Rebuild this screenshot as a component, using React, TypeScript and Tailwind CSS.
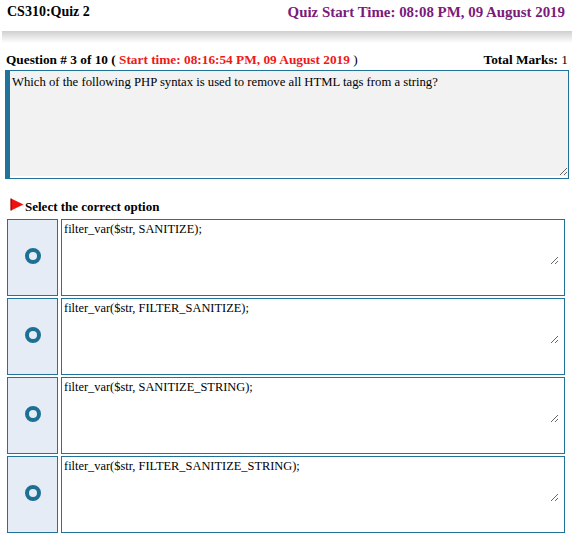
import { useState } from "react";

const options = [
  "filter_var($str, SANITIZE);",
  "filter_var($str, FILTER_SANITIZE);",
  "filter_var($str, SANITIZE_STRING);",
  "filter_var($str, FILTER_SANITIZE_STRING);",
];

export default function App() {
  const [picked, setPicked] = useState<number | null>(null);

  return (
    <div className="h-[540px] w-[574px] overflow-hidden bg-white font-['Liberation_Serif','Times_New_Roman',serif] text-black">
      <div className="flex h-[24px] items-center justify-between pl-[7px] pr-[9px] font-bold leading-none">
        <span className="text-[14px]">CS310:Quiz 2</span>
        <span className="text-[14.9px] text-[#7b1a7b]">
          Quiz Start Time: 08:08 PM, 09 August 2019
        </span>
      </div>

      <div className="mx-[2px] mt-[7px] h-[12px] bg-gradient-to-b from-[#cfcfcf] to-white" />

      <div className="mt-[9px] flex h-[16px] items-center justify-between px-[6px] text-[13.3px] leading-none">
        <p>
          <b>Question # 3 of 10 ( </b>
          <b className="text-[#f01818]">
            Start time: 08:16:54 PM, 09 August 2019
          </b>{" "}
          )
        </p>
        <p>
          <b>Total Marks:</b> 1
        </p>
      </div>

      <div className="mx-[5px] mt-[2px] flex h-[109px] w-[564px] border border-l-[5px] border-[#22739a] bg-white pb-[2px]">
        <textarea
          readOnly
          className="h-full w-full resize-y bg-[#f2f2f2] px-[2px] pt-[4px] text-[12.7px] leading-[15px] outline-none"
          defaultValue="Which of the following PHP syntax is used to remove all HTML tags from a string?"
        />
      </div>

      <div className="mt-[19px] flex h-[18px] items-center pl-[10px] text-[13px] font-bold">
        <svg width="14" height="13" viewBox="0 0 14 13" className="mb-[5px]">
          <path d="M1 0.5 L13.5 6.5 L1 12.5 Z" fill="#ee1111" />
          <path d="M1 0.5 L1 12.5" stroke="#990000" strokeWidth="1.2" />
        </svg>
        <span className="ml-[1px]">Select the correct option</span>
      </div>

      <div className="mt-[3px] flex flex-col gap-[2px] pl-[7px]">
        {options.map((text, index) => (
          <div key={text} className="flex h-[77px] gap-[3px]">
            <button
              type="button"
              onClick={() => setPicked(index)}
              className="flex w-[51px] items-center justify-center border border-[#22739a] bg-[#e6ecf5] pb-[3px]"
              aria-label={`Option ${index + 1}`}
            >
              <span
                className={
                  picked === index
                    ? "h-[16px] w-[16px] rounded-full border-[4px] border-[#1d6f93] bg-[#1d6f93]"
                    : "h-[16px] w-[16px] rounded-full border-[4px] border-[#1d6f93]"
                }
              />
            </button>
            <div className="w-[504px] border border-[#22739a] bg-white pl-[1px]">
              <textarea
                readOnly
                className="h-[45px] w-[496px] resize-y bg-white px-[1px] pt-[2px] text-[12.4px] leading-[14px] outline-none"
                defaultValue={text}
              />
            </div>
          </div>
        ))}
      </div>
    </div>
  );
}
